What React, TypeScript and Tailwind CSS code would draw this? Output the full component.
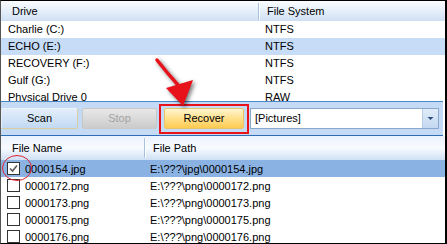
import React from "react";

const drives: [string, string][] = [
  ["Charlie (C:)", "NTFS"],
  ["ECHO (E:)", "NTFS"],
  ["RECOVERY (F:)", "NTFS"],
  ["Gulf (G:)", "NTFS"],
  ["Physical Drive 0", "RAW"],
];

const files: [string, string][] = [
  ["0000154.jpg", "E:\\???\\jpg\\0000154.jpg"],
  ["0000172.png", "E:\\???\\png\\0000172.png"],
  ["0000173.png", "E:\\???\\png\\0000173.png"],
  ["0000175.png", "E:\\???\\png\\0000175.png"],
  ["0000176.png", "E:\\???\\png\\0000176.png"],
];

function Checkbox({ checked }: { checked: boolean }) {
  return (
    <div className="w-[13px] h-[13px] shrink-0 border border-[#333333] bg-white flex items-center justify-center">
      {checked && (
        <svg width="11" height="11" viewBox="0 0 11 11">
          <path d="M2 5.5 L4.5 8 L9 2.5" fill="none" stroke="#5a5a5a" strokeWidth="1.6" />
        </svg>
      )}
    </div>
  );
}

export default function App() {
  return (
    <div className="w-[447px] h-[244px] relative overflow-hidden bg-white border-t border-l border-b border-r-2 border-t-black border-l-[#555555] border-b-black border-r-black font-['Liberation_Sans',Arial,sans-serif] text-[11px] text-black leading-none flex flex-col">
      {/* Drive list */}
      <div className="h-[100px] shrink-0 flex flex-col overflow-hidden">
        <div className="h-[20px] shrink-0 flex items-center bg-linear-to-b from-[#fbfdff] to-[#cfe0f4]">
          <div className="w-[257px] pl-[11px]">Drive</div>
          <div className="w-px h-[17px] bg-[#a7c1e0]" />
          <div className="w-px h-[17px] bg-white" />
          <div className="pl-[7px]">File System</div>
        </div>
        {drives.map(([d, fs], i) => (
          <div
            key={d}
            className={`h-[17px] shrink-0 flex items-center ${i === 1 ? "bg-[#c6dcf7]" : "bg-white"}`}
          >
            <div className="w-[264px] pl-[7px]">{d}</div>
            <div>{fs}</div>
          </div>
        ))}
      </div>

      {/* Toolbar band */}
      <div className="h-[35px] shrink-0 mr-[2px] border-t border-b border-t-[#4a86c8] border-b-[#2f6db8] bg-[#c5dbf5] pt-[6px] flex items-start">
        <div className="w-[77px] h-[21px] rounded-[2px] border border-[#d9cf9e] border-l-[#e8f0fa] border-t-[#eef4fb] bg-linear-to-b from-[#e3eefb] via-[#d3e4f8] to-[#c2d8f2] flex items-center justify-center">
          Scan
        </div>
        <div className="ml-[4px] w-[75px] h-[21px] rounded-[2px] border border-[#c8c8c8] bg-linear-to-b from-[#e8e8e8] via-[#dadada] to-[#cbcbcb] text-[#a3a3a3] flex items-center justify-center">
          Stop
        </div>
        <div className="ml-[7px] w-[80px] h-[21px] rounded-[2px] border border-[#e6c46c] bg-linear-to-b from-[#fff5cf] via-[#ffe08a] to-[#ffcb4f] flex items-center justify-center">
          Recover
        </div>
        <div className="ml-[6px] w-[189px] h-[21px] border border-[#8ba8cc] bg-white flex items-stretch">
          <div className="flex-1 pl-[4px] flex items-center">[Pictures]</div>
          <div className="w-[16px] border-l border-[#b7cce6] bg-linear-to-b from-[#e1ecf9] to-[#c4d8f1] flex items-center justify-center">
            <svg width="7" height="5" viewBox="0 0 7 5">
              <path d="M0.5 1 L6.5 1 L3.5 4 Z" fill="#2d4f80" />
            </svg>
          </div>
        </div>
      </div>

      {/* File list */}
      <div className="flex-1 flex flex-col overflow-hidden">
        <div className="h-[24px] shrink-0 flex items-center bg-linear-to-b from-[#eaf2fc] via-[#f8fbff] to-[#cfe0f4]">
          <div className="w-[143px] pl-[11px]">File Name</div>
          <div className="w-px h-[20px] bg-[#a7c1e0]" />
          <div className="w-px h-[20px] bg-white" />
          <div className="pl-[7px]">File Path</div>
        </div>
        {files.map(([n, p], i) => (
          <div
            key={n}
            className={`h-[17px] shrink-0 flex items-center ${i === 0 ? "bg-[#8ab3e4]" : "bg-white"}`}
          >
            <div className="w-[149px] pl-[6px] flex items-center">
              <Checkbox checked={i === 0} />
              <span className="ml-[5px] pt-[2px]">{n}</span>
            </div>
            <div className="pt-[2px]">{p}</div>
          </div>
        ))}
      </div>

      {/* Red highlight box */}
      <div className="absolute left-[158px] top-[103px] w-[90px] h-[30px] border-2 border-[#e8121b]" />

      {/* Red circle */}
      <svg className="absolute left-[0px] top-[152px]" width="34" height="32" viewBox="0 0 34 32">
        <ellipse cx="16" cy="15" rx="14.5" ry="12.5" fill="none" stroke="#e0242c" strokeWidth="1" />
      </svg>

      {/* Red arrow */}
      <svg
        className="absolute left-[149px] top-[51px] drop-shadow-[2px_2px_2px_rgba(0,0,0,0.55)]"
        width="50"
        height="60"
        viewBox="0 0 50 60"
      >
        <path d="M7 8 Q18 22 28 33" fill="none" stroke="#e8121b" strokeWidth="3.5" strokeLinecap="round" />
        <polygon points="16,36 43,28 33,54" fill="#e8121b" />
      </svg>
    </div>
  );
}
